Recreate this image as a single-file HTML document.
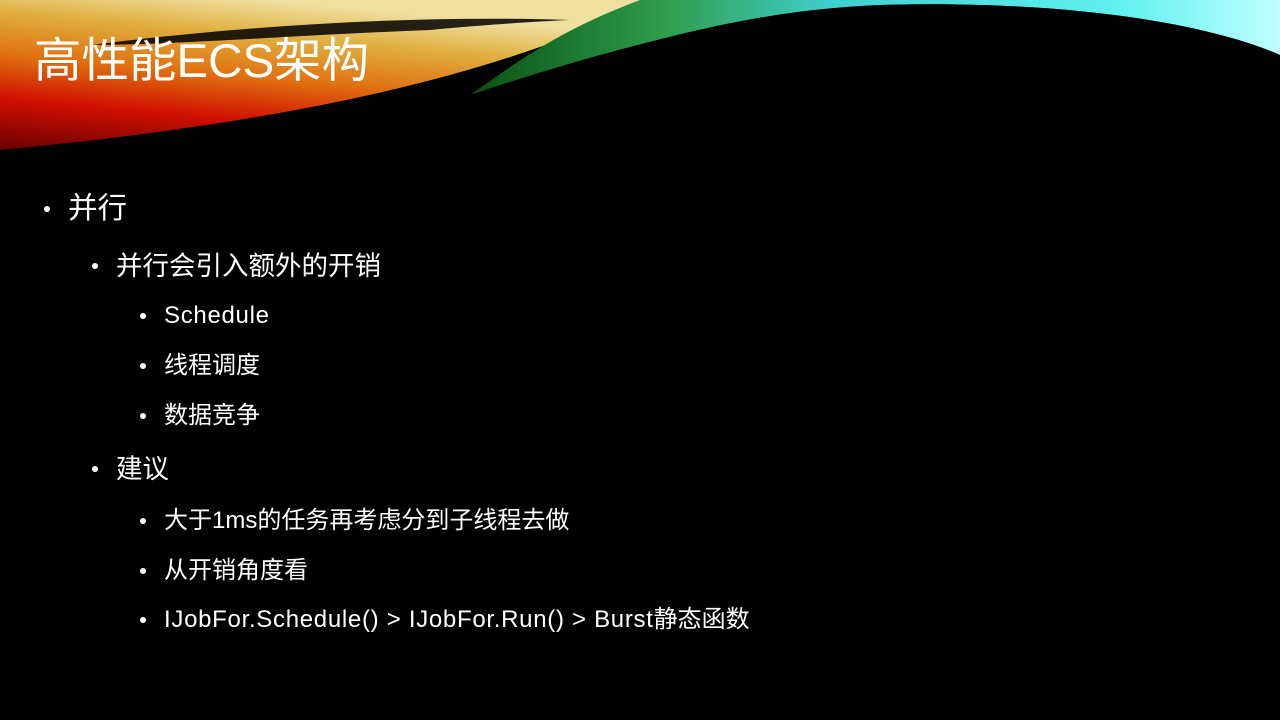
<!DOCTYPE html>
<html><head><meta charset="utf-8"><style>
body{margin:0;width:1280px;height:720px;background:#000;overflow:hidden;position:relative;font-family:"Liberation Sans","Noto Sans CJK SC",sans-serif;color:#fff}
svg{position:absolute;left:0;top:0}
.t{position:absolute;left:34px;top:32px;font-size:47.5px;line-height:60px;white-space:nowrap}
.l{position:absolute;white-space:nowrap}
.l::before{content:"";position:absolute;left:-24px;top:50%;width:6px;height:6px;margin-top:-3px;border-radius:50%;background:#fff}
.a{left:68px;font-size:29.5px;line-height:36px}
.b{left:116px;font-size:26.5px;line-height:32px}
.c{left:164px;font-size:24px;line-height:30px}
.s{letter-spacing:0.7px}
</style></head><body>
<svg width="1280" height="160" viewBox="0 0 1280 160">
<defs>
<linearGradient id="w" x1="0" y1="1" x2="0.4" y2="0">
<stop offset="0" stop-color="#6a0000"/><stop offset="0.3" stop-color="#d01000"/><stop offset="0.55" stop-color="#e07010"/><stop offset="0.8" stop-color="#e0b040"/><stop offset="1" stop-color="#f0e0a0"/></linearGradient>
<linearGradient id="g" x1="0" y1="0" x2="1" y2="0">
<stop offset="0" stop-color="#0a5010"/><stop offset="0.25" stop-color="#30a050"/><stop offset="0.45" stop-color="#40d0d0"/><stop offset="0.8" stop-color="#60f0f0"/><stop offset="1" stop-color="#c0ffff"/></linearGradient>
</defs>
<path d="M0 0 L660 0 C560 40 420 110 0 150 Z" fill="url(#w)"/>
<path d="M90 45 C250 25 420 15 570 20 C520 22 450 28 430 30 C300 35 170 45 90 45 Z" fill="#000" opacity="0.85"/>
<path d="M560 0 L1280 0 L1280 55 C1200 20 1050 0 880 5 C760 10 660 35 470 95 C520 60 560 30 640 0 Z" fill="url(#g)"/>
<path d="M470 95 C620 45 760 10 880 5 C1050 0 1200 20 1280 55 L1280 160 L0 160 L0 150 C250 130 380 120 470 95 Z" fill="#000"/>
</svg>
<div class="t">高性能ECS架构</div>
<div class="l a" style="top:191px">并行</div>
<div class="l b" style="top:250px">并行会引入额外的开销</div>
<div class="l c" style="top:301px"><span class="s">Schedule</span></div>
<div class="l c" style="top:351px">线程调度</div>
<div class="l c" style="top:401px">数据竞争</div>
<div class="l b" style="top:453px">建议</div>
<div class="l c" style="top:506px">大于1ms的任务再考虑分到子线程去做</div>
<div class="l c" style="top:556px">从开销角度看</div>
<div class="l c" style="top:605px"><span class="s">IJobFor.Schedule() &gt; IJobFor.Run() &gt; Burst</span>静态函数</div>
</body></html>
